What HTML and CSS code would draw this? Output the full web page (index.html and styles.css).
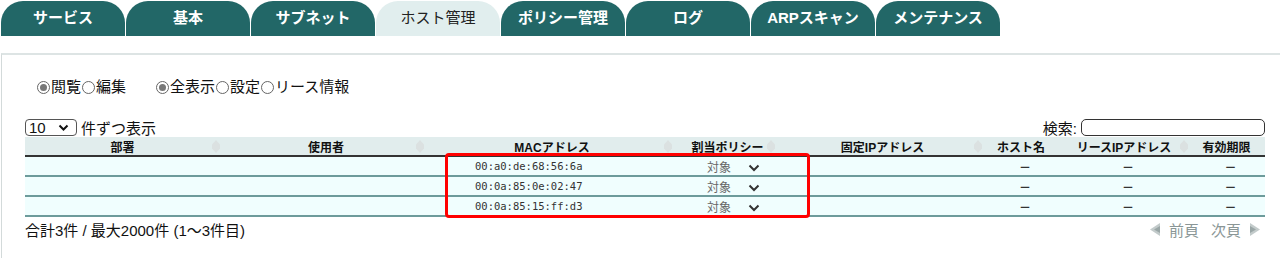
FILE: index.html
```html
<!DOCTYPE html>
<html>
<head>
  <title>ホスト管理</title>
  <link rel="stylesheet" href="styles.css">
</head>
<body>
  <ul class="tabs">
    <li>サービス</li>
    <li>基本</li>
    <li>サブネット</li>
    <li class="active">ホスト管理</li>
    <li>ポリシー管理</li>
    <li>ログ</li>
    <li>ARPスキャン</li>
    <li>メンテナンス</li>
  </ul>

  <div class="panel">
    <div class="modes">
      <span class="group">
        <label><span class="radio on"></span>閲覧</label>
        <label><span class="radio"></span>編集</label>
      </span>
      <span class="group">
        <label><span class="radio on"></span>全表示</label>
        <label><span class="radio"></span>設定</label>
        <label><span class="radio"></span>リース情報</label>
      </span>
    </div>

    <div class="toolbar">
      <div class="length">
        <span class="select-box">
          <select>
            <option>10</option>
            <option>25</option>
            <option>50</option>
          </select>
          <svg class="select-arrow" width="11" height="7" viewBox="0 0 11 7"><path d="M1.5 1.5 L5.5 5.5 L9.5 1.5" fill="none" stroke="#111" stroke-width="2"/></svg>
        </span>
        件ずつ表示
      </div>
      <div class="search">検索: <input type="text"></div>
    </div>

    <div class="table-wrap">
      <table class="hosts">
        <colgroup>
          <col style="width:203px"><col style="width:204px"><col style="width:248px"><col style="width:103px">
          <col style="width:207px"><col style="width:70px"><col style="width:136px"><col style="width:69px">
        </colgroup>
        <thead>
          <tr>
            <th class="sort">部署</th>
            <th class="sort">使用者</th>
            <th class="sort">MACアドレス</th>
            <th class="sort">割当ポリシー</th>
            <th class="sort">固定IPアドレス</th>
            <th>ホスト名</th>
            <th class="sort">リースIPアドレス</th>
            <th>有効期限</th>
          </tr>
        </thead>
        <tbody>
          <tr>
            <td></td><td></td>
            <td class="mac">00:a0:de:68:56:6a</td>
            <td class="policy"><span>対象</span><svg width="12" height="8" viewBox="0 0 12 8"><path d="M1.5 1.5 L6 6 L10.5 1.5" fill="none" stroke="#333" stroke-width="2"/></svg></td>
            <td></td><td class="c">－</td><td class="c">－</td><td class="c">－</td>
          </tr>
          <tr>
            <td></td><td></td>
            <td class="mac">00:0a:85:0e:02:47</td>
            <td class="policy"><span>対象</span><svg width="12" height="8" viewBox="0 0 12 8"><path d="M1.5 1.5 L6 6 L10.5 1.5" fill="none" stroke="#333" stroke-width="2"/></svg></td>
            <td></td><td class="c">－</td><td class="c">－</td><td class="c">－</td>
          </tr>
          <tr>
            <td></td><td></td>
            <td class="mac">00:0a:85:15:ff:d3</td>
            <td class="policy"><span>対象</span><svg width="12" height="8" viewBox="0 0 12 8"><path d="M1.5 1.5 L6 6 L10.5 1.5" fill="none" stroke="#333" stroke-width="2"/></svg></td>
            <td></td><td class="c">－</td><td class="c">－</td><td class="c">－</td>
          </tr>
        </tbody>
      </table>
      <div class="highlight"></div>
    </div>

    <div class="info">
      <span>合計3件 / 最大2000件 (1～3件目)</span>
      <span class="pager">
        <svg width="13" height="15" viewBox="0 0 13 15"><path d="M12 1 L2 7.5 L12 14 Z" fill="#c3cbcb"/><path d="M12 4 L6 7.5 L12 11 Z" fill="#9aa6a6"/></svg>
        <span>前頁</span>
        <span>次頁</span>
        <svg width="13" height="15" viewBox="0 0 13 15"><path d="M1 1 L11 7.5 L1 14 Z" fill="#c3cbcb"/><path d="M1 4 L7 7.5 L1 11 Z" fill="#9aa6a6"/></svg>
      </span>
    </div>
  </div>
</body>
</html>
```

FILE: styles.css
```css
body { margin: 0; padding: 1px 0 0 1px; font-family: "Liberation Sans", "Noto Sans CJK JP", sans-serif; font-size: 15px; color: #111; background: #fff; }

.tabs { list-style: none; margin: 0; padding: 0; display: flex; gap: 1px; }
.tabs li { width: 124px; height: 35px; line-height: 33px; text-align: center; background: #226767; color: #fff; font-weight: bold; font-size: 15px; border-radius: 22px 22px 0 0; }
.tabs li.active { background: #e1eeee; color: #222; font-weight: normal; }

.panel { margin-top: 17px; border-top: 2px solid #dde4e4; border-left: 1px solid #d3dada; padding: 0 15px 0 23px; height: 210px; }

.modes { padding: 22px 0 0 11px; height: 20px; line-height: 20px; display: flex; gap: 29px; }
.modes .group { display: flex; }
.modes label { display: inline-flex; align-items: center; }
.radio { width: 11px; height: 11px; border: 1px solid #666; border-radius: 50%; margin: 0 1px 0 1px; display: inline-block; position: relative; }
.radio.on::after { content: ""; position: absolute; left: 2px; top: 2px; width: 7px; height: 7px; border-radius: 50%; background: #777; }

.toolbar { margin-top: 21px; display: flex; justify-content: space-between; align-items: center; height: 19px; }
.length { display: flex; align-items: center; gap: 4px; }
.select-box { position: relative; display: inline-block; height: 17px; }
.select-box select { appearance: none; -webkit-appearance: none; width: 52px; height: 17px; padding: 0 0 0 3px; font-family: "Liberation Sans", sans-serif; font-size: 15px; line-height: 15px; border: 1px solid #555; border-radius: 4px; background: #fff; color: #111; }
.select-arrow { position: absolute; right: 8px; top: 5px; pointer-events: none; }
.search { display: flex; align-items: center; gap: 4px; }
.search input { width: 178px; height: 13px; border: 1.5px solid #333; border-radius: 5px; padding: 1px 2px; }

.table-wrap { position: relative; }
.hosts { width: 1240px; border-collapse: collapse; table-layout: fixed; font-size: 12px; }
.hosts th { height: 18px; padding: 0 12px 0 4px; background: #e1eded; font-weight: bold; text-align: center; border-bottom: 2px solid #333; position: relative; white-space: nowrap; }
.hosts th.sort::after { content: ""; position: absolute; right: 8px; top: 3px; width: 8px; height: 13px; background: #dbe1e1; clip-path: polygon(50% 0, 100% 35%, 100% 65%, 50% 100%, 0 65%, 0 35%); }
.hosts td { height: 18px; padding: 0; background: #f0fefe; border-bottom: 2px solid #6d9b9b; }
.hosts td.c { text-align: center; font-weight: bold; color: #333; }
.hosts td.mac { padding-left: 43px; font-family: "DejaVu Sans Mono", monospace; font-size: 10.5px; color: #333; }
.hosts td.policy { padding-left: 27px; color: #666; }
.hosts td.policy svg { margin-left: 17px; vertical-align: middle; }

.highlight { position: absolute; left: 420px; top: 16px; width: 359px; height: 59px; border: 3px solid #f00; border-radius: 4px; }

.info { display: flex; justify-content: space-between; align-items: center; margin-top: 2px; height: 20px; }
.pager { display: flex; align-items: center; gap: 8px; color: #8a9696; font-size: 15px; margin-right: 3px; }
.pager span + span { margin-left: 4px; }
```
